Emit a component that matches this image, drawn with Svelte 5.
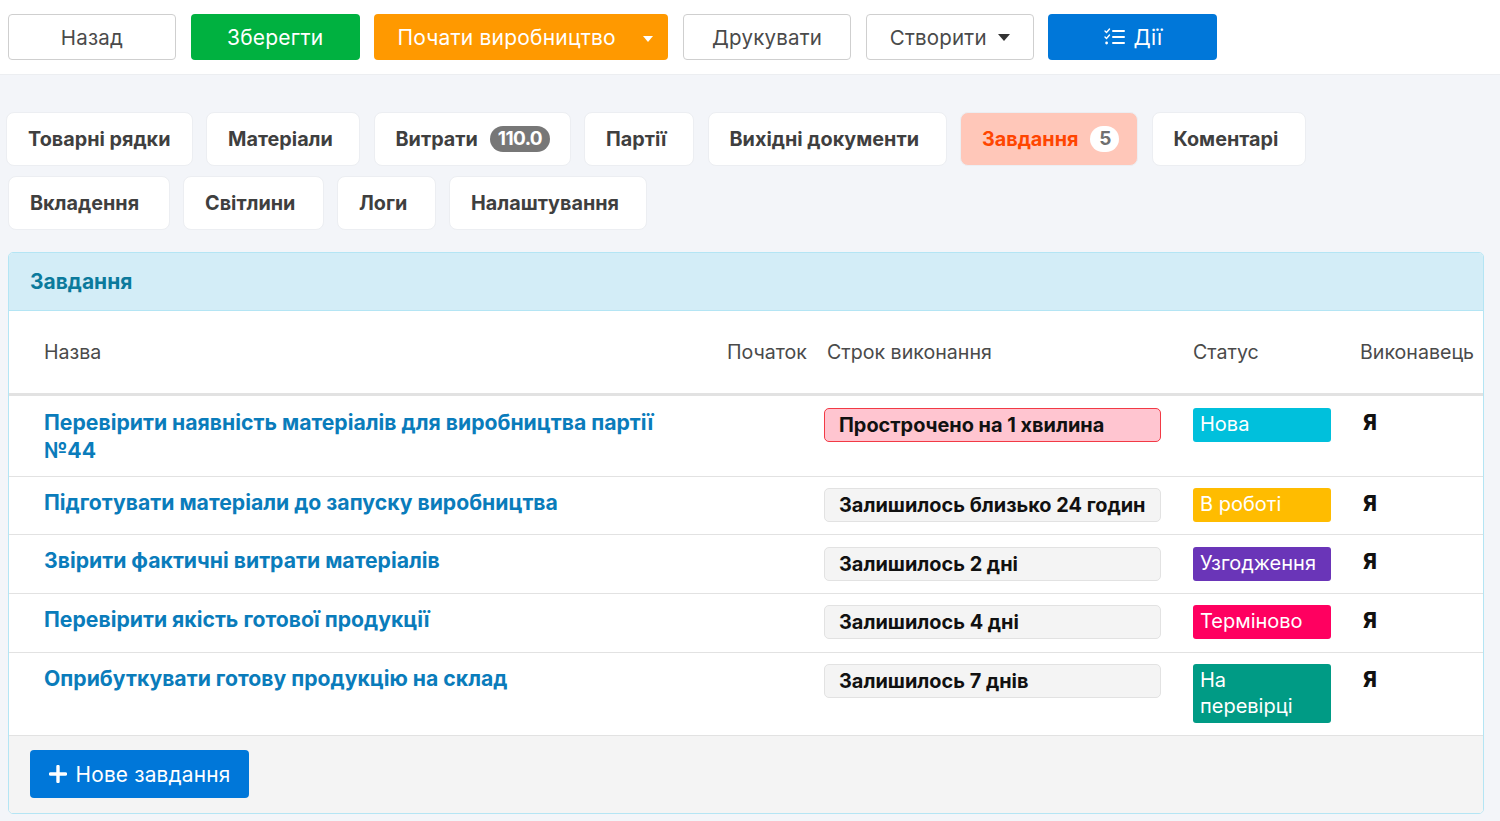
<script>
  const tabsA = [
    { t: 'Товарні рядки', w: 186.5 },
    { t: 'Матеріали', w: 154 },
    { t: 'Витрати', w: 197, badge: '110.0' },
    { t: 'Партії', w: 110 },
    { t: 'Вихідні документи', w: 239 },
    { t: 'Завдання', w: 178, badge: '5', active: true },
    { t: 'Коментарі', w: 154.5 }
  ];
  const tabsB = [
    { t: 'Вкладення', w: 162 },
    { t: 'Світлини', w: 141 },
    { t: 'Логи', w: 99 },
    { t: 'Налаштування', w: 198 }
  ];
  const rows = [
    { name: 'Перевірити наявність матеріалів для виробництва партії №44', due: 'Прострочено на 1 хвилина', late: true, status: 'Нова', color: '#00c0dc', h: 81 },
    { name: 'Підготувати матеріали до запуску виробництва', due: 'Залишилось близько 24 годин', status: 'В роботі', color: '#ffbc00', h: 58 },
    { name: 'Звірити фактичні витрати матеріалів', due: 'Залишилось 2 дні', status: 'Узгодження', color: '#6a35b8', h: 59 },
    { name: 'Перевірити якість готової продукції', due: 'Залишилось 4 дні', status: 'Терміново', color: '#ff0060', h: 59 },
    { name: 'Оприбуткувати готову продукцію на склад', due: 'Залишилось 7 днів', status: 'На перевірці', color: '#009b85', h: 83 }
  ];
</script>

<div class="page">
  <header class="bar">
    <button class="btn plain w168">Назад</button>
    <button class="btn green w169">Зберегти</button>
    <button class="btn orange split">Почати виробництво<span class="caret white"></span></button>
    <button class="btn plain w168">Друкувати</button>
    <button class="btn plain w168">Створити<span class="caret dark"></span></button>
    <button class="btn blue w169">
      <svg width="21" height="18" viewBox="0 0 21 18" fill="none" stroke="#fff" stroke-linecap="round">
        <path d="M1 3l1.5 1.5L5.5 1M1 9l1.5 1.5L5.5 7" stroke-width="1.4" />
        <circle cx="2.6" cy="15" r="1.4" fill="#fff" stroke="none" />
        <path d="M9 3h11M9 9h11M9 15h11" stroke-width="2" />
      </svg>
      Дії
    </button>
  </header>

  <nav class="tabs first">
    {#each tabsA as tab}
      <div class="tab" class:active={tab.active} style="width:{tab.w}px">
        {tab.t}{#if tab.badge}<span class="badge">{tab.badge}</span>{/if}
      </div>
    {/each}
  </nav>
  <nav class="tabs second">
    {#each tabsB as tab}
      <div class="tab" style="width:{tab.w}px">{tab.t}</div>
    {/each}
  </nav>

  <section class="panel">
    <h2>Завдання</h2>
    <table>
      <colgroup>
        <col style="width:708px" /><col style="width:100px" /><col style="width:376px" /><col style="width:167px" /><col />
      </colgroup>
      <thead>
        <tr>
          <th class="name">Назва</th>
          <th class="start">Початок</th>
          <th class="duehead">Строк виконання</th>
          <th>Статус</th>
          <th>Виконавець</th>
        </tr>
      </thead>
      <tbody>
        {#each rows as r}
          <tr style="height:{r.h}px">
            <td class="name"><span class="link">{r.name}</span></td>
            <td></td>
            <td class="cell"><div class="due" class:late={r.late}>{r.due}</div></td>
            <td class="cell"><div class="status" style="background:{r.color}">{r.status}</div></td>
            <td class="me">Я</td>
          </tr>
        {/each}
      </tbody>
    </table>
    <footer>
      <button class="btn blue add">
        <svg width="18" height="18" viewBox="0 0 18 18"><path d="M9 1.5v15M1.5 9h15" stroke="#fff" stroke-width="3.4" stroke-linecap="round" /></svg>
        Нове завдання
      </button>
    </footer>
  </section>
</div>

<style>
  :global(body) {
    margin: 0;
    background: #f3f5f9;
  }
  .page {
    font-family: Inter, "Noto Sans", "Liberation Sans", sans-serif;
    height: 821px;
    overflow: hidden;
    background: #f3f5f9;
    color: #3f3f3f;
  }
  .bar {
    height: 75px;
    box-sizing: border-box;
    background: #fff;
    border-bottom: 1px solid #eceef1;
    padding: 14px 8px 0;
    display: flex;
    gap: 14.7px;
    align-items: flex-start;
  }
  .btn {
    height: 46px;
    box-sizing: border-box;
    border-radius: 4px;
    border: none;
    font: 400 21px Inter, "Noto Sans", sans-serif;
    letter-spacing: 0.2px;
    display: flex;
    align-items: center;
    justify-content: center;
    padding: 0;
    color: #fff;
  }
  .w168 { width: 168px; }
  .w169 { width: 169px; }
  .plain {
    background: #fff;
    border: 1.5px solid #cfcfcf;
    color: #4a4a4a;
    font-size: 20.5px;
  }
  .green { background: #00b140; }
  .orange { background: #ff9900; width: 294px; }
  .blue { background: #0077d9; gap: 9px; }
  .split { justify-content: flex-start; padding-left: 23px; }
  .caret {
    display: inline-block;
    width: 0;
    height: 0;
    border-left: 5.5px solid transparent;
    border-right: 5.5px solid transparent;
    margin-left: 7px;
  }
  .caret.white { border-top: 6px solid #fff; margin-left: 27px; margin-top: 3px; }
  .caret.dark { border-left-width: 6.5px; border-right-width: 6.5px; border-top: 7px solid #333; margin-left: 11px; }

  .tabs {
    display: flex;
    gap: 13.5px;
  }
  .first { margin: 36.7px 0 0 6px; }
  .second { margin: 9.5px 0 0 8px; gap: 13px; }
  .tab {
    height: 54.5px;
    box-sizing: border-box;
    background: #fff;
    border: 1px solid #eceef2;
    border-radius: 8px;
    font-size: 19.8px;
    font-weight: 700;
    color: #3f3f3f;
    display: flex;
    align-items: center;
    padding-left: 21px;
    white-space: nowrap;
  }
  .tab.active {
    background: #ffc7b9;
    color: #ff4500;
  }
  .badge {
    background: #777;
    color: #fff;
    border-radius: 13px;
    height: 26px;
    padding: 0 8px;
    min-width: 13px;
    justify-content: center;
    margin-left: 12px;
    display: flex;
    align-items: center;
    font-size: 19px;
    letter-spacing: -0.6px;
  }
  .active .badge {
    background: #fff;
    color: #6f6f6f;
  }

  .panel {
    margin: 22px 16px 0 8px;
    border: 1.5px solid #b4e5f4;
    border-radius: 5px;
    overflow: hidden;
    background: #fff;
  }
  h2 {
    margin: 0;
    height: 58px;
    box-sizing: border-box;
    background: #d3edf7;
    border-bottom: 1px solid #b4e5f4;
    padding-left: 21px;
    display: flex;
    align-items: center;
    font-size: 21px;
    font-weight: 700;
    color: #0b7a9c;
  }
  table {
    width: 100%;
    table-layout: fixed;
    border-collapse: separate;
    border-spacing: 0;
  }
  th {
    height: 85px;
    box-sizing: border-box;
    padding: 0;
    text-align: left;
    font-weight: 400;
    font-size: 19.6px;
    color: #4a4a4a;
    border-bottom: 3px solid #e2e2e2;
    white-space: nowrap;
  }
  th.name, td.name { padding-left: 35px; }
  th.start { padding-left: 10px; }
  th.duehead { padding-left: 10px; }
  td {
    padding: 11px 0 0 0;
    vertical-align: top;
    border-bottom: 1.5px solid #e2e2e2;
    box-sizing: border-box;
  }
  td.name {
    padding-top: 11px;
    padding-right: 30px;
  }
  tbody tr:first-child td.name,
  tbody tr:first-child td.cell,
  tbody tr:nth-child(3) td.cell {
    padding-top: 12px;
  }
  .link {
    font-size: 21.2px;
    line-height: 28px;
    font-weight: 700;
    color: #0a7cbb;
    display: block;
  }
  .due {
    width: 337px;
    height: 34px;
    box-sizing: border-box;
    margin-left: 7px;
    background: #f4f4f4;
    border: 1.5px solid #e2e2e2;
    border-radius: 5px;
    font-size: 19.9px;
    font-weight: 700;
    color: #111;
    padding-left: 14px;
    display: flex;
    align-items: center;
    white-space: nowrap;
  }
  .due.late {
    background: #ffc5d0;
    border-color: #f23a45;
  }
  .status {
    width: 138px;
    box-sizing: border-box;
    padding: 4px 7px;
    border-radius: 3px;
    color: #fff;
    font-size: 20px;
    line-height: 25.5px;
  }
  .me {
    font-weight: 800;
    font-size: 21px;
    color: #111;
    padding-left: 3px;
    padding-top: 14px;
  }
  footer {
    height: 76.5px;
    box-sizing: border-box;
    background: #f4f4f4;
    padding: 14px 0 0 21px;
  }
  .add {
    width: 219px;
    height: 48px;
    gap: 9px;
    font-size: 20.8px;
  }
</style>
